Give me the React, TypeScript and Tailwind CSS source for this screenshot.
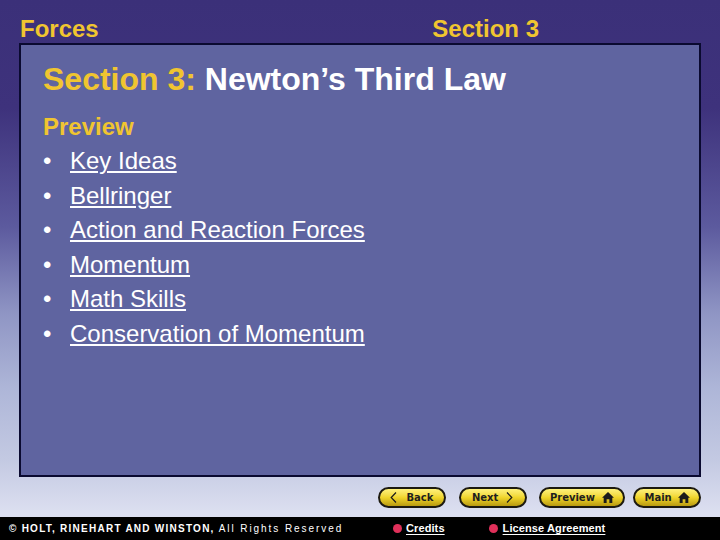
import React from "react";

function Btn({ w, gap, children }: { w: string; gap: string; children: React.ReactNode }) {
  return (
    <div className={`${w} ${gap} h-[21px] rounded-full border-2 border-[#1d1a10] bg-gradient-to-b from-[#fff27a] via-[#f0d52a] to-[#b99a10] flex items-center justify-center text-[10px] font-bold text-[#1f1f1f] leading-none font-['DejaVu_Sans',sans-serif]`}>
      {children}
    </div>
  );
}

function Home() {
  return (
    <svg width="12" height="11" viewBox="0 0 13 12" fill="#1b1b1b">
      <path d="M6.5 0 L13 6.2 L11.2 6.2 L11.2 12 L8 12 L8 8 L5 8 L5 12 L1.8 12 L1.8 6.2 L0 6.2 Z" />
    </svg>
  );
}

function Chevron({ left }: { left?: boolean }) {
  return (
    <svg width="7" height="11" viewBox="0 0 7 11" fill="none" stroke="#1b1b1b" strokeWidth="1.2">
      <path d={left ? "M6 0.5 L1.2 5.5 L6 10.5" : "M1 0.5 L5.8 5.5 L1 10.5"} />
    </svg>
  );
}

const items = ["Key Ideas", "Bellringer", "Action and Reaction Forces", "Momentum", "Math Skills", "Conservation of Momentum"];

export default function App() {
  return (
    <div className="w-[720px] h-[540px] flex flex-col overflow-hidden font-['Liberation_Sans',sans-serif] bg-[linear-gradient(to_bottom,#3b3079_0%,#3e327c_20%,#5c5a9e_42%,#8f95c4_58%,#aeb6d8_72%,#c3c9e2_85%,#dcdff0_95%)]">
      <div className="h-[517px] flex flex-col px-[19px]">
        <div className="h-[43px] flex items-end justify-between text-[#f0c530] text-[24px] font-bold leading-[28px]">
          <span className="pl-px">Forces</span>
          <span className="mr-[162px]">Section 3</span>
        </div>
        <div className="w-[682px] h-[434px] border-2 border-[#0a0a30] bg-[#5f64a0] pl-[22px] pt-[15px] text-white">
          <div className="text-[32px] font-bold leading-[38px]">
            <span className="text-[#f0c530]">Section 3: </span>Newton’s Third Law
          </div>
          <div className="mt-[11.5px] text-[24px] leading-[34.6px]">
            <div className="text-[#f0c530] font-bold">Preview</div>
            {items.map((t) => (
              <div key={t} className="flex">
                <span className="w-[27px]">•</span>
                <span className="underline underline-offset-2 decoration-2">{t}</span>
              </div>
            ))}
          </div>
        </div>
        <div className="flex mt-[10px] ml-[359px]">
          <Btn w="w-[68px]" gap="gap-[9px]"><Chevron left /><span>Back</span></Btn>
          <div className="w-[13px]" />
          <Btn w="w-[68px]" gap="gap-[8px]"><span>Next</span><Chevron /></Btn>
          <div className="w-[12px]" />
          <Btn w="w-[87px]" gap="gap-[7px]"><span>Preview</span><Home /></Btn>
          <div className="w-[8px]" />
          <Btn w="w-[68px]" gap="gap-[6px]"><span>Main</span><Home /></Btn>
        </div>
      </div>
      <div className="h-[23px] bg-black flex items-center text-white text-[10px] font-bold relative">
        <span className="ml-[9px] w-[384px] tracking-[1.25px] whitespace-nowrap">© HOLT, RINEHART AND WINSTON, <span className="font-normal tracking-[1.93px]">All Rights Reserved</span></span>
        <span className="w-[9px] h-[9px] rounded-full bg-[#e0305a]" />
        <span className="ml-[4px] underline underline-offset-2 text-[11px] tracking-[0.1px]">Credits</span>
        <span className="ml-[44px] w-[9px] h-[9px] rounded-full bg-[#e0305a]" />
        <span className="ml-[5px] underline underline-offset-2 text-[11px] tracking-[0.1px]">License Agreement</span>
      </div>
    </div>
  );
}
